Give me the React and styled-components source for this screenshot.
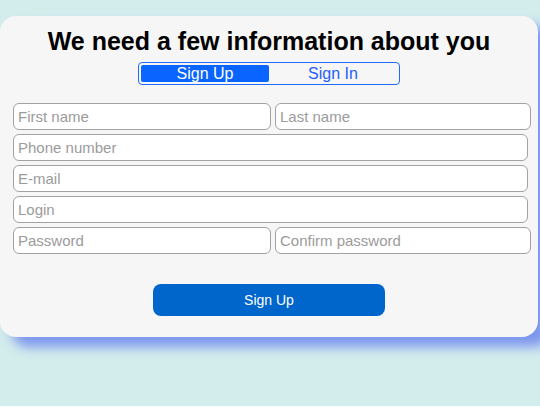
import React from "react";
import styled, { createGlobalStyle } from "styled-components";

const GlobalStyle = createGlobalStyle`
  body {
    margin: 0;
    background: #ffffff;
    font-family: "Liberation Sans", Arial, sans-serif;
  }
`;

function App() {
    return (
        <Page>
            <GlobalStyle />
            <Card>
                <Title>We need a few information about you</Title>
                <Toggle>
                    <ToggleButton $active>Sign Up</ToggleButton>
                    <ToggleButton>Sign In</ToggleButton>
                </Toggle>
                <Form>
                    <Row>
                        <Input $w={258} placeholder="First name" />
                        <Input $w={256} placeholder="Last name" />
                    </Row>
                    <Input $w={515} placeholder="Phone number" />
                    <Input $w={515} placeholder="E-mail" />
                    <Input $w={515} placeholder="Login" />
                    <Row>
                        <Input $w={258} type="password" placeholder="Password" />
                        <Input $w={256} type="password" placeholder="Confirm password" />
                    </Row>
                    <Submit type="button">Sign Up</Submit>
                </Form>
            </Card>
        </Page>
    );
}

const Page = styled.div`
  height: 406px;
  box-sizing: border-box;
  padding-top: 16px;
  background: #d3ecec;
  overflow: hidden;
`;

const Card = styled.div`
  width: 538px;
  box-sizing: border-box;
  padding: 11px 0 21px;
  background: #f6f6f6;
  border-radius: 16px;
  box-shadow: 12px 10px 12px #7d96ee;
  display: flex;
  flex-direction: column;
  align-items: center;
`;

const Title = styled.h2`
  margin: 0;
  font-size: 25px;
  line-height: 28px;
  font-weight: bold;
  color: #000;
`;

const Toggle = styled.div`
  margin-top: 7px;
  width: 262px;
  height: 23px;
  box-sizing: border-box;
  border: 1px solid #1f6bff;
  border-radius: 4px;
  padding: 2px;
  display: flex;
`;

const ToggleButton = styled.div`
  flex: 1;
  height: 17px;
  line-height: 17px;
  font-size: 16px;
  text-align: center;
  border-radius: 2px;
  background: ${(p) => (p.$active ? "#0a64ff" : "transparent")};
  color: ${(p) => (p.$active ? "#ffffff" : "#1f5fff")};
`;

const Form = styled.form`
  margin-top: 18px;
  width: 538px;
  box-sizing: border-box;
  padding-left: 13px;
  display: flex;
  flex-direction: column;
  gap: 4px;
`;

const Row = styled.div`
  display: flex;
  gap: 4px;
`;

const Input = styled.input`
  width: ${(p) => p.$w}px;
  height: 27px;
  box-sizing: border-box;
  border: 1px solid #a2a2a2;
  border-radius: 6px;
  padding: 0 4px;
  background: #ffffff;
  font-family: "Liberation Sans", Arial, sans-serif;
  font-size: 15px;
  color: #333;
  outline: none;

  &::placeholder {
    color: #9b9b9b;
  }
`;

const Submit = styled.button`
  align-self: flex-start;
  margin: 26px 0 0 140px;
  width: 232px;
  height: 32px;
  border: none;
  border-radius: 8px;
  background: #0066cc;
  color: #ffffff;
  font-family: "Liberation Sans", Arial, sans-serif;
  font-size: 14px;
  cursor: pointer;
`;

export default App;
